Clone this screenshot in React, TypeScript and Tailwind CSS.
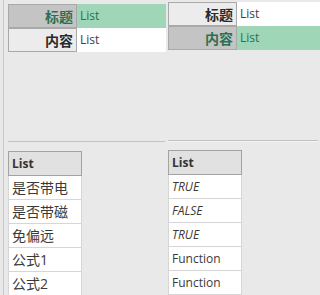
const font = { fontFamily: '"Open Sans", "Noto Sans CJK SC", sans-serif' };

type Row = { label: string; value: string; active: boolean };

function FormRows({ rows, valueWidth }: { rows: Row[]; valueWidth: string }) {
  return (
    <div className="flex flex-col">
      {rows.map((r) => (
        <div className="flex h-[24px]" key={r.label}>
          <div
            className={`flex w-[69px] items-center justify-end border border-[#a9a9a9] pr-[3px] text-[14px] font-bold ${
              r.active ? "bg-[#c4c4c4] text-[#2b7150]" : "bg-[#ececec] text-[#2a2a2a]"
            }`}
          >
            {r.label}
          </div>
          <div
            className={`flex items-center pl-[3px] text-[12px] ${valueWidth} ${
              r.active ? "bg-[#9fd6b7] text-[#2b7150]" : "bg-white text-[#3d3d3d]"
            }`}
          >
            {r.value}
          </div>
        </div>
      ))}
    </div>
  );
}

function ListTable({ items, italic, cjk }: { items: { text: string; italic?: boolean }[]; italic?: boolean; cjk?: boolean }) {
  return (
    <div className="flex w-[74px] flex-col">
      <div className="flex h-[25px] items-center border border-[#a3a3a3] bg-[#e1e1e1] pl-[3px] text-[12px] font-bold text-[#333]">
        List
      </div>
      {items.map((it, i) => (
        <div
          className={`flex h-[24px] items-center border-x border-b border-[#d6d6d6] bg-white pl-[3px] text-[#3a3a3a] ${
            cjk ? "text-[14px]" : "text-[12px]"
          } ${it.italic && italic ? "italic" : ""}`}
          key={i}
        >
          {it.text}
        </div>
      ))}
    </div>
  );
}

export default function App() {
  return (
    <div className="flex h-[295px] w-[320px] overflow-hidden bg-[#e9e9e9]" style={font}>
      <div className="ml-[3px] flex w-[163px] flex-col border-l border-[#c9c9c9] pl-[4px]">
        <div className="mt-[4px]">
          <FormRows
            valueWidth="w-[89px]"
            rows={[
              { label: "标题", value: "List", active: true },
              { label: "内容", value: "List", active: false },
            ]}
          />
        </div>
        <div className="mt-[89px] h-[2px] w-[157px] border-t border-[#c2c2c2] bg-[#f4f4f4]" />
        <div className="mt-[9px]">
          <ListTable
            cjk
            items={[{ text: "是否带电" }, { text: "是否带磁" }, { text: "免偏远" }, { text: "公式1" }, { text: "公式2" }]}
          />
        </div>
      </div>
      <div className="ml-[2px] flex flex-1 flex-col">
        <div className="mt-[2px]">
          <FormRows
            valueWidth="flex-1"
            rows={[
              { label: "标题", value: "List", active: false },
              { label: "内容", value: "List", active: true },
            ]}
          />
        </div>
        <div className="mt-[90px] h-[2px] w-[150px] border-t border-[#c2c2c2] bg-[#f4f4f4]" />
        <div className="mt-[8px]">
          <ListTable
            italic
            items={[
              { text: "TRUE", italic: true },
              { text: "FALSE", italic: true },
              { text: "TRUE", italic: true },
              { text: "Function" },
              { text: "Function" },
            ]}
          />
        </div>
      </div>
    </div>
  );
}
